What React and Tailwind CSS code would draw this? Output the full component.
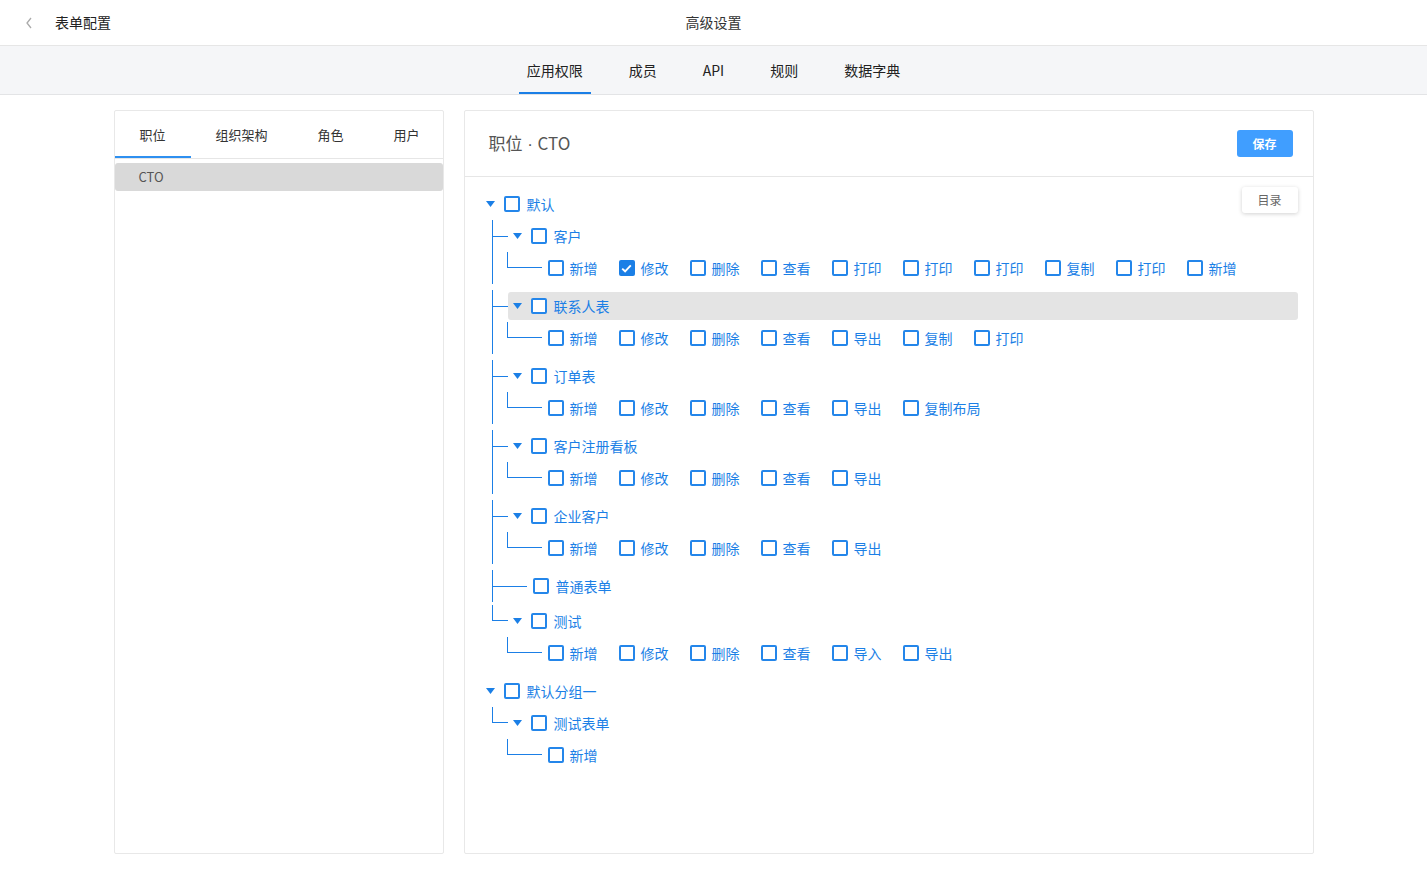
import React from 'react';

const BLUE = 'text-[#1b7fe6]';

const tree = [
    {
        name: '默认',
        children: [
            { name: '客户', perms: ['新增', '修改', '删除', '查看', '打印', '打印', '打印', '复制', '打印', '新增'], checked: [1] },
            { name: '联系人表', perms: ['新增', '修改', '删除', '查看', '导出', '复制', '打印'], highlight: true },
            { name: '订单表', perms: ['新增', '修改', '删除', '查看', '导出', '复制布局'] },
            { name: '客户注册看板', perms: ['新增', '修改', '删除', '查看', '导出'] },
            { name: '企业客户', perms: ['新增', '修改', '删除', '查看', '导出'] },
            { name: '普通表单', leaf: true },
            { name: '测试', perms: ['新增', '修改', '删除', '查看', '导入', '导出'] },
        ],
    },
    {
        name: '默认分组一',
        children: [{ name: '测试表单', perms: ['新增'] }],
    },
];

const Check = ({ checked }) =>
    checked ? (
        <span className="w-[16px] h-[16px] rounded-[2px] bg-[#1b7fe6] flex items-center justify-center shrink-0">
            <svg width="11" height="9" viewBox="0 0 11 9" fill="none">
                <path d="M1.2 4.6 L4.1 7.3 L9.8 1.4" stroke="white" strokeWidth="1.9" />
            </svg>
        </span>
    ) : (
        <span className="block w-[16px] h-[16px] rounded-[2px] border-2 border-[#2486ea] bg-white shrink-0" />
    );

const Arrow = () => (
    <span className="w-[14px] h-[14px] flex items-center justify-center shrink-0">
        <svg width="9" height="6" viewBox="0 0 9 6">
            <polygon points="0,0 9,0 4.5,6" fill="#1b7fe6" />
        </svg>
    </span>
);

const PermRow = ({ perms, checked = [] }) => (
    <div className="flex h-[32px] mb-[6px]">
        <div className="ml-[14px] w-[35px] h-[16px] border-l border-b border-[#1b7fe6] shrink-0" />
        <div className="flex items-center gap-x-[21px] ml-[6px]">
            {perms.map((p, i) => (
                <div key={i} className="flex items-center gap-[6px]">
                    <Check checked={checked.includes(i)} />
                    <span className={`text-[14px] whitespace-nowrap ${BLUE}`}>{p}</span>
                </div>
            ))}
        </div>
    </div>
);

const ChildNode = ({ node, last }) => {
    return (
        <div className={`border-l ${last ? 'border-transparent' : 'border-[#1b7fe6]'} ${node.leaf ? 'mb-[3px]' : ''}`}>
            <div className="flex items-center h-[32px]">
                {last ? (
                    <div className="-ml-px w-[16px] h-[16px] self-start border-l border-b border-[#1b7fe6] shrink-0" />
                ) : (
                    <div className={`${node.leaf ? 'w-[34px]' : 'w-[15px]'} h-px bg-[#1b7fe6] shrink-0`} />
                )}
                {node.leaf ? (
                    <div className="flex items-center ml-[6px]">
                        <Check />
                        <span className={`ml-[7px] text-[14px] ${BLUE}`}>{node.name}</span>
                    </div>
                ) : (
                    <div className={`flex items-center flex-1 h-[28px] pl-[3px] rounded-[3px] ${node.highlight ? 'bg-[#e4e4e4]' : ''}`}>
                        <Arrow />
                        <span className="ml-[6px]"><Check /></span>
                        <span className={`ml-[7px] text-[14px] ${BLUE}`}>{node.name}</span>
                    </div>
                )}
            </div>
            {node.perms && <PermRow perms={node.perms} checked={node.checked} />}
        </div>
    );
};

export default function App() {
    const topTabs = ['应用权限', '成员', 'API', '规则', '数据字典'];
    const leftTabs = ['职位', '组织架构', '角色', '用户'];

    return (
        <div className="min-h-[885px] bg-white text-[#333]" style={{ fontFamily: '"Noto Sans CJK SC", "Noto Sans", sans-serif' }}>
            {/* header */}
            <div className="h-[46px] border-b border-[#e6e6e6] grid grid-cols-[1fr_auto_1fr] items-center">
                <div className="flex items-center pl-[24px]">
                    <svg width="10" height="14" viewBox="0 0 10 14" fill="none">
                        <path d="M7 2 L3 7 L7 12" stroke="#aaa" strokeWidth="1.3" />
                    </svg>
                    <span className="ml-[21px] text-[14px] text-[#222]">表单配置</span>
                </div>
                <span className="text-[14px] text-[#333]">高级设置</span>
                <div />
            </div>

            {/* tab bar */}
            <div className="h-[49px] bg-[#f5f6f8] border-b border-[#e3e4e6] flex justify-center gap-[30px]">
                {topTabs.map((t, i) => (
                    <div key={t} className={`px-[8px] pt-[2px] flex items-center text-[14px] text-[#222] border-b-2 ${i === 0 ? 'border-[#1b7fe6]' : 'border-transparent'}`}>
                        {t}
                    </div>
                ))}
            </div>

            <div className="w-[1200px] mx-auto mt-[15px] flex gap-[20px]">
                {/* left panel */}
                <div className="w-[330px] h-[744px] border border-[#e8e8e8] rounded-[2px] shrink-0 overflow-hidden">
                    <div className="flex h-[48px] border-b border-[#e6e6e6]">
                        {leftTabs.map((t, i) => (
                            <div key={t} className={`px-[25px] pt-[2px] shrink-0 whitespace-nowrap flex items-center text-[13px] text-[#333] border-b-2 ${i === 0 ? 'border-[#2e90f0]' : 'border-transparent'}`}>
                                {t}
                            </div>
                        ))}
                    </div>
                    <div className="mt-[4px] h-[28px] bg-[#d9d9d9] rounded-[3px] flex items-center pl-[24px] text-[13px] text-[#555]">
                        CTO
                    </div>
                </div>

                {/* right panel */}
                <div className="flex-1 h-[744px] border border-[#e8e8e8] rounded-[2px]">
                    <div className="h-[66px] border-b border-[#e6e6e6] flex items-center justify-between pl-[24px] pr-[20px]">
                        <span className="text-[17px] text-[#555]">
                            职位<span style={{ fontFamily: '"Liberation Sans", sans-serif' }}> · </span>CTO
                        </span>
                        <button className="w-[56px] h-[27px] rounded-[3px] bg-[#409eff] text-white text-[12px] font-bold">保存</button>
                    </div>

                    <div className="relative pt-[11px] pl-[19px] pr-[15px]">
                        <button className="absolute right-[15px] top-[10px] w-[56px] h-[26px] bg-white rounded-[3px] shadow-[0_1px_4px_rgba(0,0,0,0.18)] text-[12px] text-[#666]">
                            目录
                        </button>
                        {tree.map((g) => (
                            <div key={g.name}>
                                <div className="flex items-center h-[32px]">
                                    <Arrow />
                                    <span className="ml-[6px]"><Check /></span>
                                    <span className={`ml-[7px] text-[14px] ${BLUE}`}>{g.name}</span>
                                </div>
                                <div className="ml-[8px]">
                                    {g.children.map((c, i) => (
                                        <ChildNode key={c.name} node={c} last={i === g.children.length - 1} />
                                    ))}
                                </div>
                            </div>
                        ))}
                    </div>
                </div>
            </div>
        </div>
    );
}
